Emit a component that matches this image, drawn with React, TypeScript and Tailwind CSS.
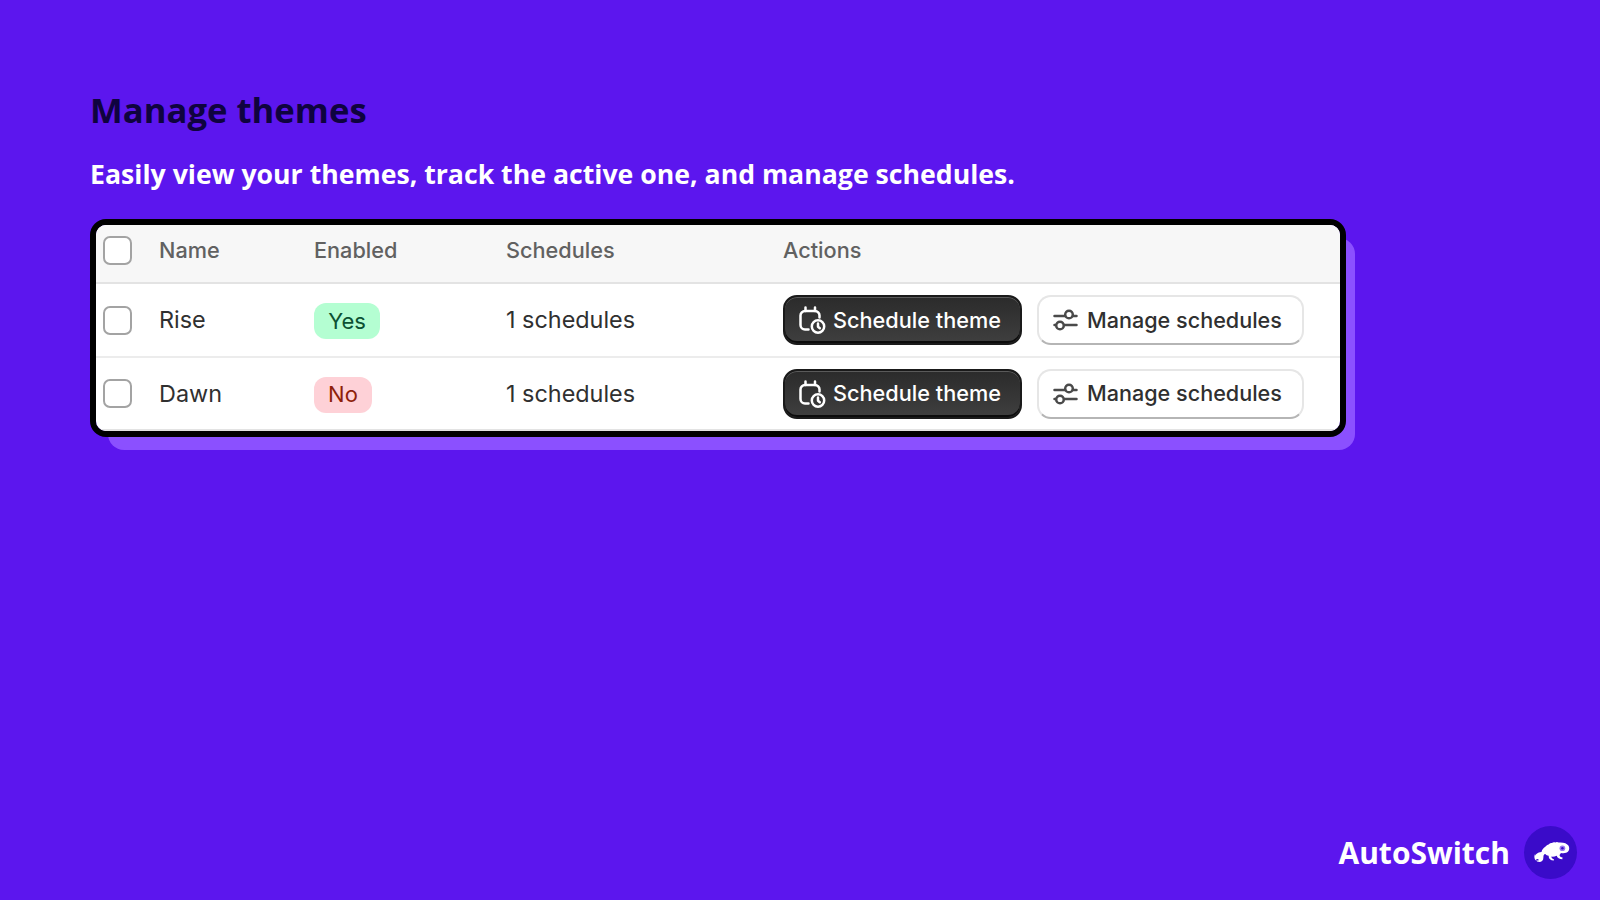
function CalendarClock({ className }: { className?: string }) {
  return (
    <svg className={className} viewBox="0 0 27 28" fill="none" stroke="currentColor" strokeWidth="2.5" strokeLinecap="round" strokeLinejoin="round">
      <path d="M9.5 23.5H6A4.5 4.5 0 0 1 1.500 19V9.500A4.500 4.500 0 0 1 6 5h10a4.500 4.500 0 0 1 4.500 4.500v2" />
      <path d="M6.500 1.500V5M16 1.500V5" />
      <circle cx="19" cy="20.500" r="6.200" />
      <path d="M19 17.500v3.200l1.800 1.500" />
    </svg>
  );
}

function Sliders({ className }: { className?: string }) {
  return (
    <svg className={className} viewBox="0 0 25 22" fill="none" stroke="currentColor" strokeWidth="2.5" strokeLinecap="round">
      <path d="M1.500 7h10.500M20 7h3.500M1.500 16H3M11 16h12.500" />
      <circle cx="16" cy="5.500" r="3.800" />
      <circle cx="7" cy="16.500" r="3.800" />
    </svg>
  );
}

function Chameleon({ className }: { className?: string }) {
  return (
    <svg className={className} viewBox="0 0 40 28" fill="white">
      <path d="M3 17.500c2-3 5-4 7-4 .5-2.500 2-4 4-5.500 1-1.500 2.500-2 3.500-2.500 1-1.200 2.500-1.500 3.500-1.500 1-1 2.500-1 3.500-.5 1-.7 2.500-.7 3.500 0 4-.5 9 .5 10.500 3.500 1 2 1 4.500-.5 6-1.500 1.500-4 2-7.500 1.500l-1.500 2c0 1.500 1.500 2.500 3 2.500v2c-3 0-5.500-1-6-3.500-2 .8-4 1-5.500.8-.2 1.500.8 2.700 2.500 2.700v1.500c-3.500 0-5.500-1.500-5.500-5-1.500-.3-2.500-1-3.500-2-1.500.3-2 1.500-2 3.500 0 3.500-1.500 5-4.500 5s-5-2.500-5-5.500c0-1.500.5-2.500 1-3.500z" />
      <circle cx="32" cy="9.500" r="3" fill="#9a78f0" />
      <circle cx="32" cy="9.500" r="1.300" fill="#3a0bc9" />
      <path d="M7.500 24c-1 1.500-3.500.8-3.500-1 0-1.500 2-2 2.700-.7" fill="none" stroke="#3a0bc9" strokeWidth="1.200" />
    </svg>
  );
}

function Check() {
  return <span className="block w-[29px] h-[29px] shrink-0 rounded-[7px] bg-white border-2 border-[#a3a3a3]" />;
}

const cols = "grid grid-cols-[56px_155px_192px_277px_1fr] items-center pl-[7px]";

function Row({ name, yes, last }: { name: string; yes: boolean; last?: boolean }) {
  return (
    <div className={`${cols} ${last ? "h-[73px] border-b-2 border-[#e3e3e3]" : "h-[74px] border-b-2 border-[#ececec]"} text-[23.4px] text-[#303030]`}>
      <Check />
      <span>{name}</span>
      <span className="flex pt-[2px]">
        <span className={`inline-flex h-[36px] items-center justify-center rounded-[12px] text-[22px] ${yes ? "w-[66px] bg-[#b4fed2] text-[#0c5132]" : "w-[58px] bg-[#fed1d7] text-[#8e1f0b]"}`}>
          {yes ? "Yes" : "No"}
        </span>
      </span>
      <span>1 schedules</span>
      <div className="flex items-center gap-[15px]">
        <button className="flex h-[50px] w-[239px] items-center gap-[7px] pl-[14px] rounded-[14px] border-2 border-[#1a1a1a] bg-gradient-to-b from-[#2b2b2b] to-[#3f3f3f] shadow-[inset_0_1px_0_#5a5a5a,inset_0_-2px_0_#0c0c0c] text-white font-medium text-[21.7px] whitespace-nowrap">
          <CalendarClock className="w-[27px] h-[28px] shrink-0" />
          <span>Schedule theme</span>
        </button>
        <button className="flex h-[50px] w-[267px] items-center gap-[9px] pl-[14px] rounded-[14px] bg-white border-2 border-[#e6e6e6] border-b-[#b5b5b5] text-[#303030] font-medium text-[21.6px] whitespace-nowrap">
          <Sliders className="w-[25px] h-[22px] shrink-0 text-[#4a4a4a]" />
          <span>Manage schedules</span>
        </button>
      </div>
    </div>
  );
}

export default function App() {
  return (
    <div className="relative flex flex-col h-[900px] w-full overflow-hidden bg-[#5c16ee] pl-[90px] pt-[85px] font-['Inter',sans-serif]">
      <h1 className="font-['Open_Sans',sans-serif] font-bold text-[34.7px] leading-[50px] text-[#0f033f]">Manage themes</h1>
      <p className="mt-[20px] font-['Open_Sans',sans-serif] font-bold text-[26.67px] leading-[38px] text-white">
        Easily view your themes, track the active one, and manage schedules.
      </p>
      <div className="relative mt-[26px] w-[1256px]">
        <div className="absolute left-[18px] top-[19px] w-[1247px] h-[212px] rounded-[16px] bg-[#8b50ff]" />
        <div className="relative border-[6px] border-black rounded-[16px] bg-[#5c16ee]">
          <div className="rounded-[10px] overflow-hidden bg-white">
            <div className={`${cols} h-[59px] pb-[7px] bg-[#f7f7f7] border-b-2 border-[#e3e3e3] text-[21.7px] font-medium text-[#616161]`}>
              <Check />
              <span>Name</span>
              <span>Enabled</span>
              <span>Schedules</span>
              <span>Actions</span>
            </div>
            <Row name="Rise" yes />
            <Row name="Dawn" yes={false} last />
          </div>
        </div>
      </div>
      <div className="absolute right-[23px] bottom-[21px] flex items-center gap-[14px]">
        <span className="font-['Open_Sans',sans-serif] font-bold text-[30px] text-white">AutoSwitch</span>
        <span className="flex h-[53px] w-[53px] items-center justify-center rounded-full bg-[#3a0bc9]">
          <Chameleon className="w-[38px] h-[27px]" />
        </span>
      </div>
    </div>
  );
}
